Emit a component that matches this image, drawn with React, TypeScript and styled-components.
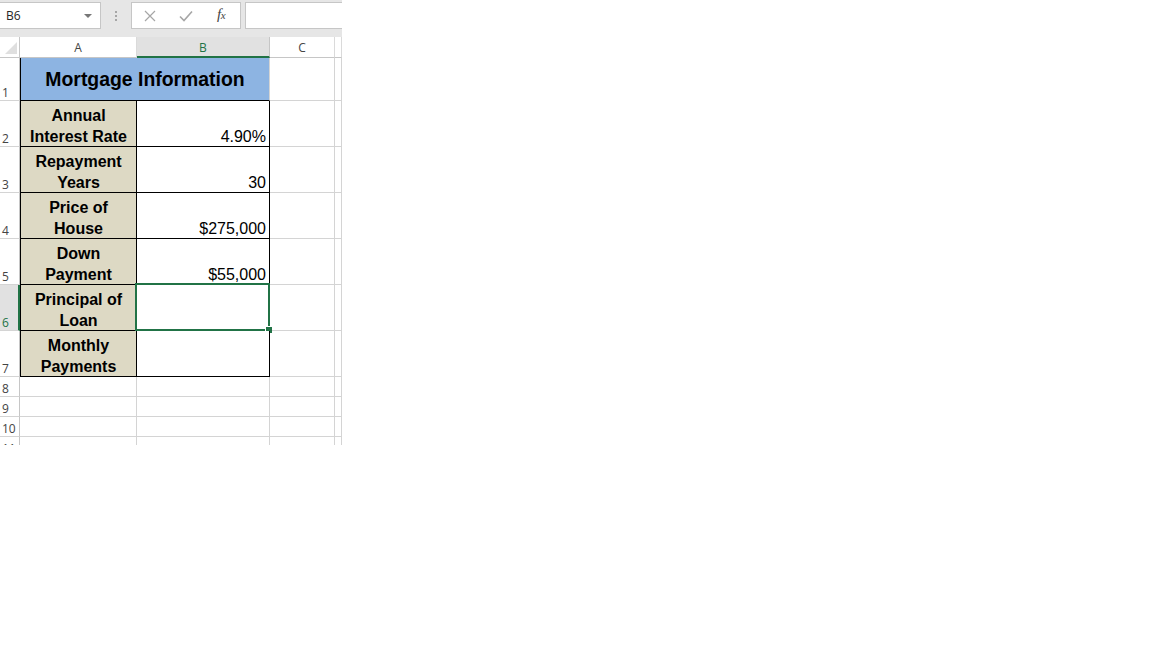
import React from "react";
import styled, { createGlobalStyle } from "styled-components";

const GREEN = "#217346";
const GRID = "#d4d4d4";

const GlobalStyle = createGlobalStyle`
  html, body {
    margin: 0;
    padding: 0;
    background: #ffffff;
  }
  * {
    box-sizing: border-box;
  }
`;

const Page = styled.div`
  width: 1152px;
  height: 648px;
  background: #ffffff;
  overflow: hidden;
`;

const Workbook = styled.div`
  width: 342px;
  height: 445px;
  overflow: hidden;
  display: flex;
  flex-direction: column;
`;

const FormulaBar = styled.div`
  height: 37px;
  flex: none;
  background: #e6e6e6;
  display: flex;
  align-items: flex-start;
  padding-top: 2px;
`;

const NameBox = styled.div`
  width: 101px;
  height: 27px;
  background: #ffffff;
  border: 1px solid #c6c6c6;
  border-left: none;
  display: flex;
  align-items: center;
  justify-content: space-between;
  padding: 0 8px 1px 6px;
  font-family: "Open Sans", "Liberation Sans", sans-serif;
  font-size: 12px;
  color: #262626;
`;

const DropArrow = styled.span`
  width: 0;
  height: 0;
  border-left: 4px solid transparent;
  border-right: 4px solid transparent;
  border-top: 4px solid #777777;
  margin-top: 1px;
`;

const Grip = styled.div`
  width: 30px;
  height: 27px;
  display: flex;
  flex-direction: column;
  align-items: center;
  justify-content: center;
  gap: 2px;
`;

const GripDot = styled.span`
  width: 2px;
  height: 2px;
  background: #a6a6a6;
`;

const FormulaButtons = styled.div`
  width: 110px;
  height: 27px;
  background: #ffffff;
  border: 1px solid #c6c6c6;
  display: flex;
  align-items: center;
  padding-left: 12px;
  gap: 23px;
`;

const FxLabel = styled.span`
  font-family: "Liberation Serif", serif;
  font-style: italic;
  font-size: 15px;
  color: #444444;
  margin-left: 1px;
  margin-top: -2px;
  letter-spacing: -0.5px;

  small {
    font-size: 11px;
  }
`;

const FormulaInput = styled.div`
  flex: 1;
  height: 27px;
  margin-left: 4px;
  background: #ffffff;
  border: 1px solid #c6c6c6;
  border-right: none;
`;

const Sheet = styled.div`
  display: grid;
  grid-template-columns: 20px 117px 133px 65px 1fr;
  grid-template-rows: 21px 43px repeat(6, 46px) repeat(4, 20px);
  background: #ffffff;
`;

const Corner = styled.div`
  position: relative;
  border-right: 1px solid #c6c6c6;
  border-bottom: 1px solid #c6c6c6;
  background: #ffffff;

  &::after {
    content: "";
    position: absolute;
    right: 2px;
    bottom: 3px;
    width: 0;
    height: 0;
    border-left: 12px solid transparent;
    border-bottom: 12px solid #dfdfdf;
  }
`;

const ColHeader = styled.div<{ $selected?: boolean }>`
  display: flex;
  align-items: center;
  justify-content: center;
  padding-top: 1px;
  background: ${({ $selected }) => ($selected ? "#e1e1e1" : "#ffffff")};
  border-right: 1px solid ${({ $selected }) => ($selected ? "#c6c6c6" : "#dadada")};
  border-bottom: ${({ $selected }) => ($selected ? `2px solid ${GREEN}` : "1px solid #c6c6c6")};
  font-family: "Open Sans", "Liberation Sans", sans-serif;
  font-size: 12px;
  color: ${({ $selected }) => ($selected ? GREEN : "#444444")};
`;

const RowHeader = styled.div<{ $selected?: boolean }>`
  display: flex;
  align-items: flex-end;
  padding: 0 0 0 2px;
  background: ${({ $selected }) => ($selected ? "#e1e1e1" : "#ffffff")};
  border-right: ${({ $selected }) => ($selected ? `2px solid ${GREEN}` : "1px solid #c6c6c6")};
  border-bottom: 1px solid ${GRID};
  font-family: "Open Sans", "Liberation Sans", sans-serif;
  font-size: 12px;
  line-height: 15px;
  color: ${({ $selected }) => ($selected ? GREEN : "#444444")};
  overflow: hidden;
`;

const Cell = styled.div`
  border-right: 1px solid ${GRID};
  border-bottom: 1px solid ${GRID};
`;

const TitleCell = styled.div`
  grid-column: span 2;
  display: flex;
  align-items: center;
  justify-content: center;
  padding-top: 1px;
  background: #8db4e2;
  border-left: 1px solid #000000;
  border-right: 1px solid ${GRID};
  border-bottom: 1px solid #000000;
  font-family: "Liberation Sans", Arial, sans-serif;
  font-weight: 700;
  font-size: 19.4px;
  color: #000000;
`;

const LabelCell = styled.div`
  display: flex;
  align-items: flex-end;
  justify-content: center;
  text-align: center;
  background: #ddd9c4;
  border-left: 1px solid #000000;
  border-right: 1px solid #000000;
  border-bottom: 1px solid #000000;
  font-family: "Liberation Sans", Arial, sans-serif;
  font-weight: 700;
  font-size: 16px;
  line-height: 21px;
  color: #000000;

  span {
    margin-bottom: -1px;
  }
`;

const ValueCell = styled.div<{ $selected?: boolean }>`
  position: relative;
  display: flex;
  align-items: flex-end;
  justify-content: flex-end;
  padding-right: 3px;
  background: #ffffff;
  border-right: 1px solid #000000;
  border-bottom: 1px solid #000000;
  font-family: "Liberation Sans", Arial, sans-serif;
  font-size: 16px;
  line-height: 21px;
  color: #000000;

  span {
    margin-bottom: -1px;
  }

  ${({ $selected }) =>
    $selected &&
    `
    &::before {
      content: "";
      position: absolute;
      top: -2px;
      left: -2px;
      right: -1px;
      bottom: -1px;
      border: 2px solid ${GREEN};
    }
    &::after {
      content: "";
      position: absolute;
      right: -3px;
      bottom: -3px;
      width: 6px;
      height: 6px;
      background: ${GREEN};
      border-left: 1px solid #ffffff;
      border-top: 1px solid #ffffff;
    }
  `}
`;

function CrossIcon() {
  return (
    <svg width="12" height="12" viewBox="0 0 12 12">
      <path d="M1 1 L11 11 M11 1 L1 11" stroke="#a6a6a6" strokeWidth="1.2" fill="none" />
    </svg>
  );
}

function CheckIcon() {
  return (
    <svg width="14" height="12" viewBox="0 0 14 12">
      <path d="M1 6.5 L5 10.5 L13 1.5" stroke="#a6a6a6" strokeWidth="1.6" fill="none" />
    </svg>
  );
}

const rows = [
  { label: ["Annual", "Interest Rate"], value: "4.90%" },
  { label: ["Repayment", "Years"], value: "30" },
  { label: ["Price of", "House"], value: "$275,000" },
  { label: ["Down", "Payment"], value: "$55,000" },
  { label: ["Principal of", "Loan"], value: "", selected: true },
  { label: ["Monthly", "Payments"], value: "" },
];

export default function App() {
  return (
    <Page>
      <GlobalStyle />
      <Workbook>
        <FormulaBar>
          <NameBox>
            B6
            <DropArrow />
          </NameBox>
          <Grip>
            <GripDot />
            <GripDot />
            <GripDot />
          </Grip>
          <FormulaButtons>
            <CrossIcon />
            <CheckIcon />
            <FxLabel>
              f<small>x</small>
            </FxLabel>
          </FormulaButtons>
          <FormulaInput />
        </FormulaBar>

        <Sheet>
          <Corner />
          <ColHeader>A</ColHeader>
          <ColHeader $selected>B</ColHeader>
          <ColHeader>C</ColHeader>
          <ColHeader />

          <RowHeader>1</RowHeader>
          <TitleCell>Mortgage Information</TitleCell>
          <Cell />
          <Cell />

          {rows.map((row, i) => (
            <React.Fragment key={i}>
              <RowHeader $selected={row.selected}>{i + 2}</RowHeader>
              <LabelCell>
                <span>
                  {row.label[0]}
                  <br />
                  {row.label[1]}
                </span>
              </LabelCell>
              <ValueCell $selected={row.selected}>
                <span>{row.value}</span>
              </ValueCell>
              <Cell />
              <Cell />
            </React.Fragment>
          ))}

          {[8, 9, 10, 11].map((n) => (
            <React.Fragment key={n}>
              <RowHeader>{n}</RowHeader>
              <Cell />
              <Cell />
              <Cell />
              <Cell />
            </React.Fragment>
          ))}
        </Sheet>
      </Workbook>
    </Page>
  );
}
